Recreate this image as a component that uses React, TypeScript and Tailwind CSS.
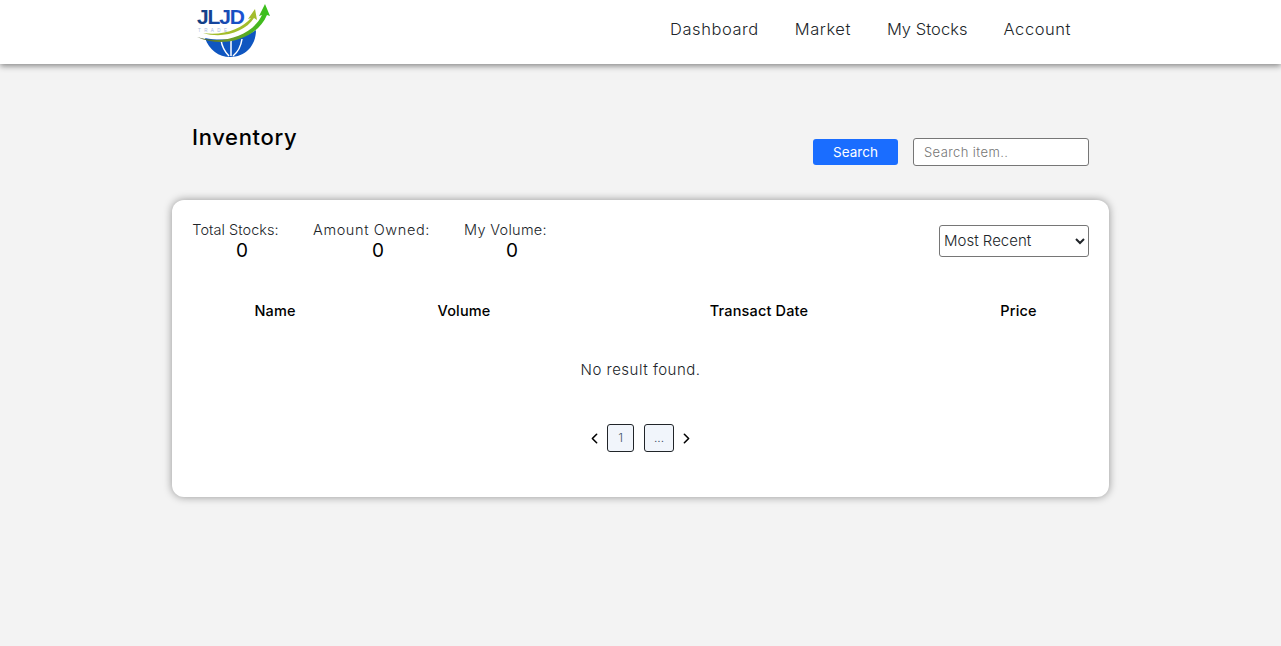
import { ChevronLeft, ChevronRight } from "lucide-react"

const navLinks = [
  { label: "Dashboard", tracking: "tracking-[0.55px]" },
  { label: "Market", tracking: "tracking-[0.55px]" },
  { label: "My Stocks", tracking: "tracking-[0.05px]" },
  { label: "Account", tracking: "tracking-[0.55px]" },
]

const stats = [
  { label: "Total Stocks:", box: "w-[87px]", tracking: "tracking-[0.05px]" },
  { label: "Amount Owned:", box: "w-[117px]", tracking: "tracking-[0.6px]" },
  { label: "My Volume:", box: "w-[83px]", tracking: "tracking-[0.3px]" },
]

function Logo() {
  return (
    <svg width="80" height="60" viewBox="0 0 80 60" className="block">
      <defs>
        <linearGradient id="swoosh" x1="0" y1="0" x2="1" y2="0">
          <stop offset="0" stopColor="#4a5a2e" />
          <stop offset="0.45" stopColor="#6f9a2a" />
          <stop offset="1" stopColor="#35c41a" />
        </linearGradient>
        <linearGradient id="letters" x1="0" y1="0" x2="1" y2="0">
          <stop offset="0" stopColor="#123c7c" />
          <stop offset="1" stopColor="#1a55d8" />
        </linearGradient>
      </defs>
      <path d="M10 38 C14 50 24 57 35 57 C50 57 61 46 61 30 C50 38 30 42 10 38 Z" fill="#0f56c0" />
      <path d="M26 40 C27 47 30 52 34 56 M47 39 C46 46 43 52 38 56 M36 40 V56" stroke="#fff" strokeWidth="1.5" fill="none" />
      <text x="2" y="24" fontFamily="'Liberation Sans', sans-serif" fontSize="21" fontWeight="700" fill="url(#letters)" textLength="48">JLJD</text>
      <text x="3" y="32" fontFamily="'Liberation Sans', sans-serif" fontSize="4.5" fill="#a9b9dc" textLength="29">TRADE</text>
      <path d="M2 37 C28 45 57 36 67 15 L64 16 L70 4 L75 16 L72 15 C62 39 28 49 2 37 Z" fill="url(#swoosh)" />
      <path d="M8 33 C28 36 47 29 56 18 L53 19 L60 9 L62 20 L59 18 C50 32 28 39 8 33 Z" fill="#a3bd2c" />
    </svg>
  )
}

export default function App() {
  return (
    <div className="min-h-[646px] bg-[#f3f3f3] font-['Inter',sans-serif] text-[#212529]">
      <nav className="h-16 bg-white shadow-[0_2px_6px_rgba(0,0,0,0.45)]">
        <div className="mx-auto flex h-full w-[937px] items-start justify-between">
          <div className="ml-[23px]">
            <Logo />
          </div>
          <ul className="mr-[38px] flex gap-9 pt-[19px] text-[16.5px] leading-5 font-light">
            {navLinks.map((link) => (
              <li key={link.label} className={link.tracking}>{link.label}</li>
            ))}
          </ul>
        </div>
      </nav>

      <main className="mx-auto w-[937px] pt-[60px]">
        <div className="flex h-[76px] items-start justify-between px-5">
          <h1 className="mt-[-1px] text-[22px] leading-7 font-medium tracking-[0.65px] text-black">Inventory</h1>
          <div className="mt-[14px] flex items-center gap-[15px]">
            <button className="h-[26px] w-[85px] rounded-[3px] bg-[#1a6dff] text-[13.5px] text-white">Search</button>
            <input
              placeholder="Search item.."
              className="h-7 w-44 rounded-[3px] border border-[#767676] bg-white px-[10px] text-[13px] font-light tracking-[0.4px] placeholder:text-[#757575]"
            />
          </div>
        </div>

        <section className="h-[297px] rounded-xl bg-white px-5 pt-[20px] shadow-[0_0_8px_rgba(0,0,0,0.4)]">
          <div className="flex items-start justify-between">
            <div className="flex gap-[34px]">
              {stats.map((stat) => (
                <div key={stat.label} className={stat.box}>
                  <div className={`text-center text-[14.5px] leading-[20px] font-light whitespace-nowrap ${stat.tracking}`}>
                    {stat.label}
                  </div>
                  <div className="pl-[13px] text-center text-[19px] leading-[22px] text-black">0</div>
                </div>
              ))}
            </div>
            <select className="mt-[5px] h-8 w-[150px] rounded-[3px] border border-[#767676] bg-white pb-[2px] text-[15px] font-light">
              <option>Most Recent</option>
            </select>
          </div>

          <div className="mt-[39px] grid grid-cols-[166px_212px_378px_141px] text-center text-[14.5px] leading-5 font-medium tracking-[0.15px] text-black">
            <div>Name</div>
            <div>Volume</div>
            <div>Transact Date</div>
            <div>Price</div>
          </div>

          <p className="mt-[39px] text-center text-[15px] leading-5 font-light tracking-[0.5px]">No result found.</p>

          <div className="mt-[44px] flex items-center justify-center">
            <ChevronLeft className="mr-1 size-[17px] text-black" strokeWidth={2.25} />
            <span className="flex h-7 w-[27px] items-center justify-center rounded-[3px] border border-[#212529] bg-[#f1f5fb] text-xs font-light text-[#44546a]">1</span>
            <span className="ml-[10px] flex h-7 w-[30px] items-center justify-center rounded-[3px] border border-[#212529] bg-[#f1f5fb] text-xs font-light text-[#44546a]">...</span>
            <ChevronRight className="ml-[4px] size-[17px] text-black" strokeWidth={2.25} />
          </div>
        </section>
      </main>
    </div>
  )
}
